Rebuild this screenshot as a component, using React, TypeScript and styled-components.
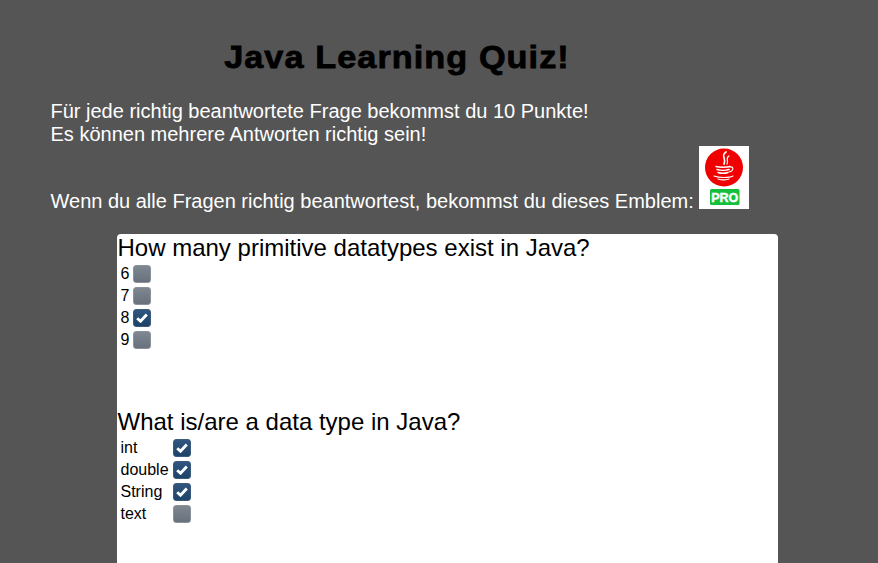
import { FC } from 'react';
import styled, { createGlobalStyle } from 'styled-components';

const GlobalStyle = createGlobalStyle`
    html, body {
        margin: 0;
        height: 100%;
        overflow: hidden;
        background: #555555;
    }
    body {
        font-family: "Liberation Sans", Arial, sans-serif;
    }
`;

const Page = styled.div`
    width: 878px;
    height: 563px;
    overflow: hidden;
    padding: 38px 0 0 50px;
    box-sizing: border-box;
    color: #fff;
`;

const Title = styled.h1`
    width: 694px;
    margin: 0 0 24px;
    text-align: center;
    color: #000;
    font-size: 32px;
    line-height: 38px;
    font-weight: 700;
    letter-spacing: 1px;
    -webkit-text-stroke: 0.8px #000;
    transform: scaleX(1.07);
`;

const Intro = styled.p`
    margin: 0;
    padding-left: 0.5px;
    font-size: 20px;
    line-height: 23px;
`;

const EmblemLine = styled.div`
    display: flex;
    align-items: flex-end;
    gap: 5.5px;
    margin: 0 0 25px;
    padding-left: 0.5px;
    font-size: 20px;
    line-height: 23px;
`;

const EmblemText = styled.span`
    margin-bottom: -4px;
`;

const Emblem = styled.svg`
    display: block;
    width: 50px;
    height: 63px;
`;

const Panel = styled.main`
    width: 661px;
    height: 400px;
    margin-left: 67px;
    background: #fff;
    border-radius: 4px 4px 0 0;
    color: #000;
    box-sizing: border-box;
`;

const QuestionBlock = styled.section`
    height: 174px;
`;

const Question = styled.h2`
    margin: 0 0 2px;
    padding-left: 0.5px;
    font-size: 24px;
    line-height: 27px;
    font-weight: 400;
`;

const Answers = styled.div<{ $labelWidth: number }>`
    display: grid;
    grid-template-columns: ${p => p.$labelWidth}px 18px;
    grid-auto-rows: 22px;
    align-items: center;
    padding-left: 3.5px;
    font-size: 16px;
`;

const Label = styled.label`
    line-height: 18px;
`;

const Box = styled.span<{ $checked: boolean }>`
    display: flex;
    align-items: center;
    justify-content: center;
    width: 18px;
    height: 18px;
    box-sizing: border-box;
    border-radius: 3px;
    border: 1px solid ${p => (p.$checked ? '#3c5a7c' : '#8a929c')};
    background: ${p =>
        p.$checked
            ? 'linear-gradient(#30557f, #1d4368)'
            : 'linear-gradient(#7f8791, #68717c)'};
`;

const Tick = styled.svg`
    display: block;
    width: 12px;
    height: 10px;
`;

type Answer = { label: string; checked: boolean };

const QUESTIONS: { text: string; labelWidth: number; answers: Answer[] }[] = [
    {
        text: 'How many primitive datatypes exist in Java?',
        labelWidth: 12.5,
        answers: [
            { label: '6', checked: false },
            { label: '7', checked: false },
            { label: '8', checked: true },
            { label: '9', checked: false },
        ],
    },
    {
        text: 'What is/are a data type in Java?',
        labelWidth: 52.5,
        answers: [
            { label: 'int', checked: true },
            { label: 'double', checked: true },
            { label: 'String', checked: true },
            { label: 'text', checked: false },
        ],
    },
];

const JavaProBadge: FC = () => (
    <Emblem viewBox="0 0 50 63" role="img" aria-label="Java Pro">
        <rect width="50" height="63" fill="#fff" />
        <circle cx="25" cy="21.5" r="19" fill="#f00000" />
        <g fill="none" stroke="#fff" strokeLinecap="round">
            <path d="M27 6c-6 4 1 6-2 12" strokeWidth="1.7" />
            <path d="M30 10c-4 2 0 4-2 8" strokeWidth="1.2" />
            <path d="M17 20.5c3 1 11 1 14 0M18 23.5c3 1 9 1 12 0M19 26.5c3 1 7 1 10 0" strokeWidth="1.5" />
            <path d="M31 21c4-1 4 4-1 5" strokeWidth="1.1" />
            <path d="M15 30c5 2 15 2 19 0M19 33c3 1 8 1 11 0" strokeWidth="1.1" />
        </g>
        <rect x="11" y="43" width="29.5" height="16" rx="1.5" fill="#13bf3c" />
        <text
            x="25.7"
            y="56"
            textAnchor="middle"
            fill="#fff"
            stroke="#fff"
            strokeWidth="0.4"
            fontFamily="Liberation Sans, Arial, sans-serif"
            fontSize="12.5"
            fontWeight="700"
        >
            PRO
        </text>
    </Emblem>
);

const Row: FC<{ answer: Answer }> = ({ answer }) => (
    <>
        <Label>{answer.label}</Label>
        <Box $checked={answer.checked}>
            {answer.checked && (
                <Tick viewBox="0 0 12 10">
                    <path
                        d="M1.2 5.2 4.5 8.2 10.8 1.6"
                        fill="none"
                        stroke="#fff"
                        strokeWidth="2.9"
                    />
                </Tick>
            )}
        </Box>
    </>
);

const App: FC = () => (
    <>
        <GlobalStyle />
        <Page>
            <Title>Java Learning Quiz!</Title>
            <Intro>
                Für jede richtig beantwortete Frage bekommst du 10 Punkte!
                <br />
                Es können mehrere Antworten richtig sein!
            </Intro>
            <EmblemLine>
                <EmblemText>
                    Wenn du alle Fragen richtig beantwortest, bekommst du dieses Emblem:
                </EmblemText>
                <JavaProBadge />
            </EmblemLine>
            <Panel>
                {QUESTIONS.map(question => (
                    <QuestionBlock key={question.text}>
                        <Question>{question.text}</Question>
                        <Answers $labelWidth={question.labelWidth}>
                            {question.answers.map(answer => (
                                <Row key={answer.label} answer={answer} />
                            ))}
                        </Answers>
                    </QuestionBlock>
                ))}
            </Panel>
        </Page>
    </>
);

export default App;
